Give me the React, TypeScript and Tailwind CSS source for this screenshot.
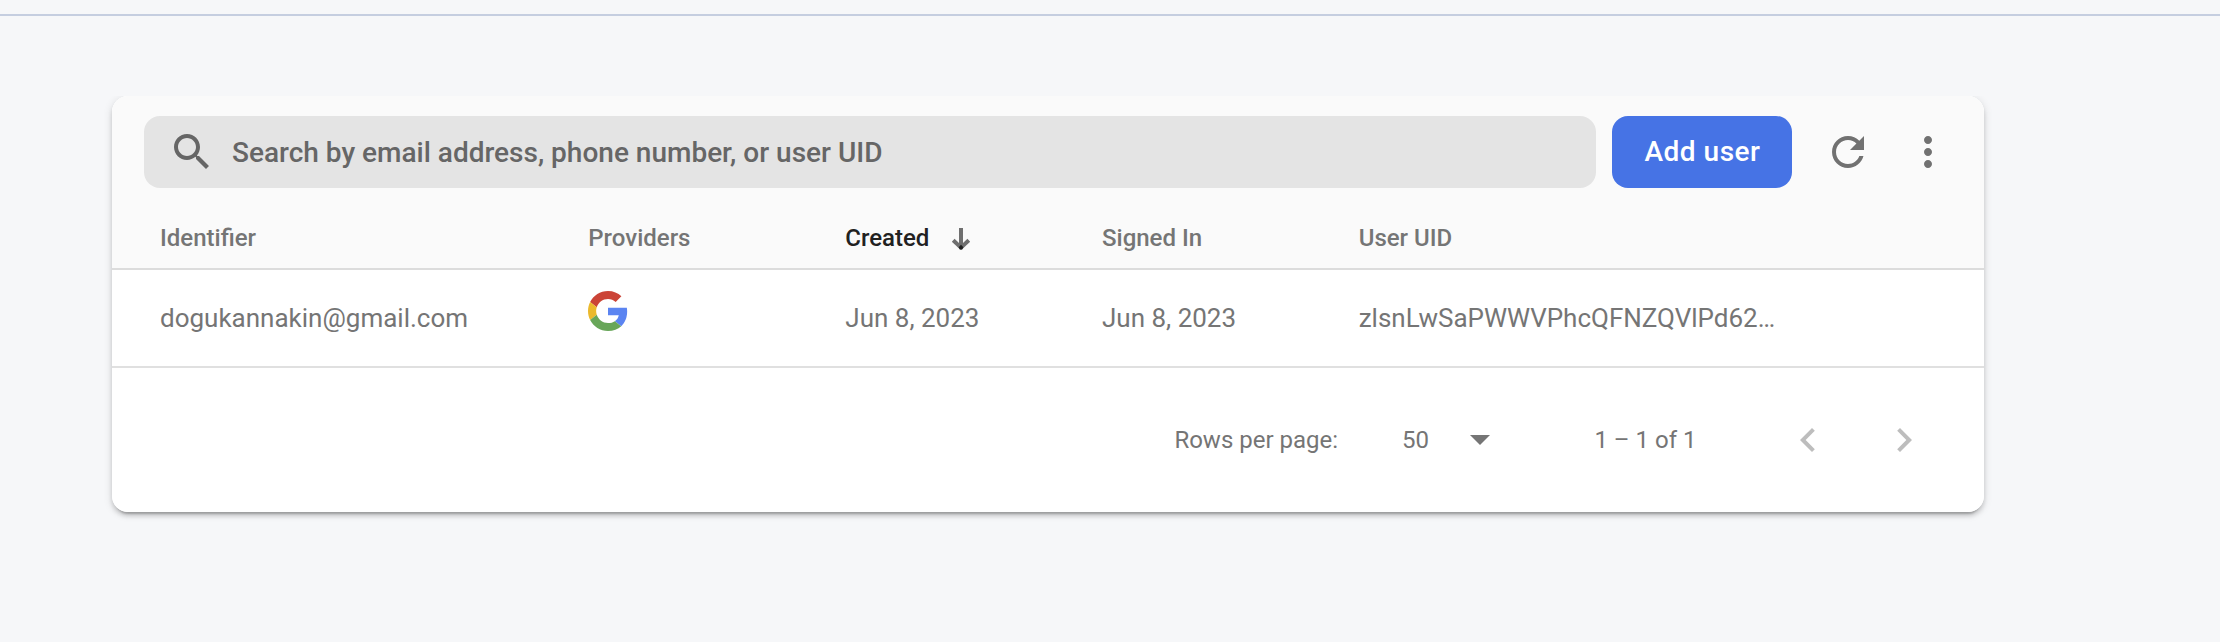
import React from "react";

type IconProps = { path: string; className?: string };

function Icon({ path, className = "" }: IconProps) {
  return (
    <svg viewBox="0 0 24 24" className={`size-12 shrink-0 fill-current ${className}`} aria-hidden="true">
      <path d={path} />
    </svg>
  );
}

const SEARCH =
  "M15.5 14h-.79l-.28-.27C15.41 12.59 16 11.11 16 9.5 16 5.91 13.09 3 9.5 3S3 5.91 3 9.5 5.91 16 9.5 16c1.61 0 3.09-.59 4.23-1.57l.27.28v.79l5 4.99L20.49 19l-4.99-5zm-6 0C7.01 14 5 11.99 5 9.5S7.01 5 9.5 5 14 7.01 14 9.5 11.99 14 9.5 14z";
const REFRESH =
  "M17.65 6.35C16.2 4.9 14.21 4 12 4c-4.42 0-7.99 3.58-7.99 8s3.57 8 7.99 8c3.73 0 6.84-2.55 7.73-6h-2.08c-.82 2.33-3.04 4-5.65 4-3.31 0-6-2.69-6-6s2.69-6 6-6c1.66 0 3.14.69 4.22 1.78L13 11h7V4l-2.35 2.35z";
const MORE =
  "M12 8c1.1 0 2-.9 2-2s-.9-2-2-2-2 .9-2 2 .9 2 2 2zm0 2c-1.1 0-2 .9-2 2s.9 2 2 2 2-.9 2-2-.9-2-2-2zm0 6c-1.1 0-2 .9-2 2s.9 2 2 2 2-.9 2-2-.9-2-2-2z";
const PREV = "M15.41 7.41L14 6l-6 6 6 6 1.41-1.41L10.83 12z";
const NEXT = "M10 6L8.59 7.41 13.17 12l-4.58 4.59L10 18l6-6z";

function GoogleLogo() {
  return (
    <svg viewBox="0 0 48 48" className="size-10" aria-label="Google">
      <path
        fill="#cb4437"
        d="M24 9.5c3.54 0 6.71 1.22 9.21 3.6l6.85-6.85C35.9 2.38 30.47 0 24 0 14.62 0 6.51 5.38 2.56 13.22l7.98 6.19C12.43 13.72 17.74 9.5 24 9.5z"
      />
      <path
        fill="#5b84f1"
        d="M46.98 24.55c0-1.57-.15-3.09-.38-4.55H24v9.02h12.94c-.58 2.96-2.26 5.48-4.78 7.18l7.73 6c4.51-4.18 7.09-10.36 7.09-17.65z"
      />
      <path
        fill="#ebb92d"
        d="M10.53 28.59c-.48-1.45-.76-2.99-.76-4.59s.27-3.14.76-4.59l-7.98-6.19C.92 16.46 0 20.12 0 24c0 3.88.92 7.54 2.56 10.78l7.97-6.19z"
      />
      <path
        fill="#68a659"
        d="M24 48c6.48 0 11.93-2.13 15.89-5.81l-7.73-6c-2.15 1.45-4.92 2.3-8.16 2.3-6.26 0-11.57-4.22-13.47-9.91l-7.98 6.19C6.51 42.62 14.62 48 24 48z"
      />
    </svg>
  );
}

function SortArrow() {
  return (
    <svg viewBox="0 0 20 24" className="mt-1 ml-[22px] h-6 w-5" aria-hidden="true">
      <path d="M8 0h4v20H8z" fill="#6f6f6f" />
      <path d="M2.2 12.2L10 19.6L17.8 12.2" stroke="#6f6f6f" strokeWidth="4" strokeLinejoin="round" fill="none" />
      <path d="M10 16.8l2.4 2.4-1.2 2.4h-2.4l-1.2-2.4z" fill="#212121" />
    </svg>
  );
}

const COLS = "grid grid-cols-[428.3px_257px_256.7px_256.7px_1fr] pl-12";

export default function App() {
  return (
    <div className="h-[642px] w-[2220px] overflow-hidden bg-[#f6f7f9] font-['Roboto',sans-serif] text-[#757575]">
      <div className="h-4 border-b-2 border-[#c5cee0]" />
      <div className="pt-20">
        <div className="ml-28 h-[416px] w-[1872px] rounded-2xl shadow-[0_6px_2px_-4px_rgba(0,0,0,0.2),0_4px_4px_0_rgba(0,0,0,0.14),0_2px_10px_0_rgba(0,0,0,0.12)] [clip-path:inset(0_-20px_-20px_-20px)]">
          <div className="flex h-full flex-col overflow-hidden rounded-2xl bg-white">
            <div className="h-[174px] shrink-0 border-b-2 border-[#dcdcdc] bg-[#fafafa]">
              <div className="flex items-center pt-5 pl-8">
                <div className="flex h-[72px] w-[1452px] items-center rounded-2xl bg-[#e4e4e4] pl-6 text-[#666666]">
                  <Icon path={SEARCH} />
                  <span className="ml-4 pt-0.5 text-[28px] leading-10 font-medium">
                    Search by email address, phone number, or user UID
                  </span>
                </div>
                <button className="ml-4 flex h-[72px] w-[180px] items-center justify-center rounded-2xl bg-[#4673e5] pl-px text-[28px] font-medium tracking-[0.5px] text-white">
                  Add user
                </button>
                <button className="ml-8" aria-label="Refresh">
                  <Icon path={REFRESH} className="text-[#717171]" />
                </button>
                <button className="ml-8" aria-label="More">
                  <Icon path={MORE} className="text-[#717171]" />
                </button>
              </div>
              <div className={`${COLS} h-[80px] items-center pt-[20px] text-2xl font-medium`}>
                <span>Identifier</span>
                <span>Providers</span>
                <span className="flex items-center text-[#212121]">
                  Created
                  <SortArrow />
                </span>
                <span>Signed In</span>
                <span>User UID</span>
              </div>
            </div>
            <div className={`${COLS} h-[98px] shrink-0 items-center border-b-2 border-[#e0e0e0] text-[26px]`}>
              <span>dogukannakin@gmail.com</span>
              <span className="-mt-[15px]">
                <GoogleLogo />
              </span>
              <span>Jun 8, 2023</span>
              <span>Jun 8, 2023</span>
              <span>zlsnLwSaPWWVPhcQFNZQVlPd62…</span>
            </div>
            <div className="flex h-36 items-center pl-[1062.4px] text-2xl">
              <span className="w-[227.6px]">Rows per page:</span>
              <span className="w-[68px]">50</span>
              <svg viewBox="0 0 20 10" className="h-2.5 w-5 fill-current" aria-hidden="true">
                <path d="M0 0h20L10 10z" />
              </svg>
              <span className="ml-[104.4px] w-[189.6px]">1 – 1 of 1</span>
              <Icon path={PREV} className="text-[#bdbdbd]" />
              <Icon path={NEXT} className="ml-12 text-[#bdbdbd]" />
            </div>
          </div>
        </div>
      </div>
    </div>
  );
}
